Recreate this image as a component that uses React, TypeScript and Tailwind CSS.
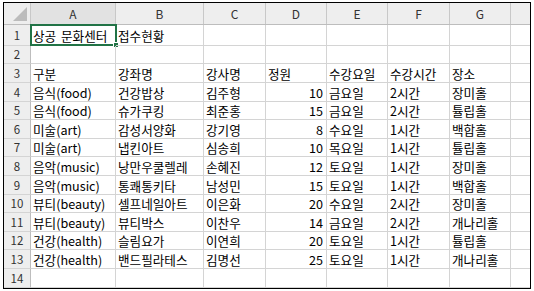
import React from 'react';

type Row = { h: string; cells: string[] };

const cols = ['A', 'B', 'C', 'D', 'E', 'F', 'G', ''];
const colW = ['w-[85px]', 'w-[88px]', 'w-[62px]', 'w-[61px]', 'w-[61px]', 'w-[62px]', 'w-[61px]', 'flex-1'];

const rows: Row[] = [
  { h: 'h-[21px]', cells: ['상공 문화센터', '접수현황', '', '', '', '', '', ''] },
  { h: 'h-[18px]', cells: ['', '', '', '', '', '', '', ''] },
  { h: 'h-[19px]', cells: ['구분', '강좌명', '강사명', '정원', '수강요일', '수강시간', '장소', ''] },
  { h: 'h-[19px]', cells: ['음식(food)', '건강밥상', '김주형', '10', '금요일', '2시간', '장미홀', ''] },
  { h: 'h-[18px]', cells: ['음식(food)', '슈가쿠킹', '최준홍', '15', '금요일', '2시간', '튤립홀', ''] },
  { h: 'h-[19px]', cells: ['미술(art)', '감성서양화', '강기영', '8', '수요일', '1시간', '백합홀', ''] },
  { h: 'h-[18px]', cells: ['미술(art)', '냅킨아트', '심송희', '10', '목요일', '1시간', '튤립홀', ''] },
  { h: 'h-[19px]', cells: ['음악(music)', '낭만우쿨렐레', '손혜진', '12', '토요일', '1시간', '장미홀', ''] },
  { h: 'h-[19px]', cells: ['음악(music)', '통쾌통키타', '남성민', '15', '토요일', '1시간', '백합홀', ''] },
  { h: 'h-[18px]', cells: ['뷰티(beauty)', '셀프네일아트', '이은화', '20', '수요일', '2시간', '장미홀', ''] },
  { h: 'h-[19px]', cells: ['뷰티(beauty)', '뷰티박스', '이찬우', '14', '금요일', '2시간', '개나리홀', ''] },
  { h: 'h-[18px]', cells: ['건강(health)', '슬림요가', '이연희', '20', '토요일', '1시간', '튤립홀', ''] },
  { h: 'h-[19px]', cells: ['건강(health)', '밴드필라테스', '김명선', '25', '토요일', '1시간', '개나리홀', ''] },
  { h: 'h-[19px]', cells: ['', '', '', '', '', '', '', ''] },
];

const isNum = (s: string) => /^\d+$/.test(s);

export default function App() {
  return (
    <div className="w-[534px] h-[291px] bg-white pl-[3px] pt-[2px] font-['Noto_Sans_CJK_KR','Malgun_Gothic',sans-serif] text-black">
      <div className="w-[528px] h-[287px] border border-black flex flex-col overflow-hidden">
        {/* column header */}
        <div className="flex h-[22px] bg-[#eeeeee] border-b border-[#bdbdbd]">
          <div className="w-[27px] border-r border-[#c8c8c8] relative">
            <div className="absolute right-[3px] bottom-[3px] w-0 h-0 border-l-[14px] border-l-transparent border-b-[14px] border-b-[#bcbcbc]" />
          </div>
          {cols.map((c, i) => (
            <div
              key={i}
              className={`${colW[i]} ${i < 7 ? 'border-r border-[#c8c8c8]' : ''} flex items-center justify-center text-[12px] text-[#333] ${i === 0 ? 'bg-[#e2e2e2]' : ''}`}
            >
              {c}
            </div>
          ))}
        </div>
        {rows.map((r, ri) => (
          <div key={ri} className={`flex ${r.h} shrink-0`}>
            <div
              className={`w-[27px] bg-[#eeeeee] border-r border-[#bdbdbd] border-b border-b-[#d4d4d4] flex items-center justify-center pt-px text-[11.5px] text-[#333] ${ri === 0 ? 'bg-[#e2e2e2]' : ''}`}
            >
              {ri + 1}
            </div>
            {r.cells.map((v, ci) => (
              <div
                key={ci}
                className={`${colW[ci]} relative border-b border-[#d4d4d4] ${ci < 7 ? 'border-r' : ''} flex items-center pt-[2px] ${isNum(v) ? 'justify-end pr-[3px]' : 'pl-[2px]'} text-[12.6px] [word-spacing:2px] leading-none whitespace-nowrap`}
              >
                {v}
                {ri === 0 && ci === 0 && (
                  <div className="absolute -left-[1px] -top-[1px] w-[87px] h-[22px] border-2 border-[#217346]">
                    <div className="absolute -right-[4px] -bottom-[4px] w-[6px] h-[6px] bg-[#217346] border border-white" />
                  </div>
                )}
              </div>
            ))}
          </div>
        ))}
      </div>
    </div>
  );
}
